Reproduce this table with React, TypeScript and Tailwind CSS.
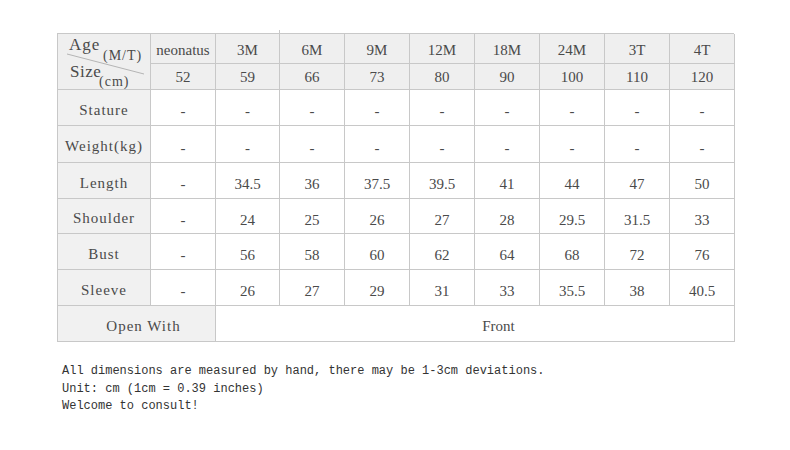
import React from "react";

const cols = ["neonatus", "3M", "6M", "9M", "12M", "18M", "24M", "3T", "4T"];
const sizes = ["52", "59", "66", "73", "80", "90", "100", "110", "120"];
const rows: { label: string; vals: string[]; h: string }[] = [
  { label: "Stature", vals: ["-", "-", "-", "-", "-", "-", "-", "-", "-"], h: "h-[36px]" },
  { label: "Weight(kg)", vals: ["-", "-", "-", "-", "-", "-", "-", "-", "-"], h: "h-[37px]" },
  { label: "Length", vals: ["-", "34.5", "36", "37.5", "39.5", "41", "44", "47", "50"], h: "h-[36px]" },
  { label: "Shoulder", vals: ["-", "24", "25", "26", "27", "28", "29.5", "31.5", "33"], h: "h-[35px]" },
  { label: "Bust", vals: ["-", "56", "58", "60", "62", "64", "68", "72", "76"], h: "h-[36px]" },
  { label: "Sleeve", vals: ["-", "26", "27", "29", "31", "33", "35.5", "38", "40.5"], h: "h-[36px]" },
];

const serif = { fontFamily: '"Liberation Serif", "Noto Serif", serif' };

export default function App() {
  return (
    <div className="w-[790px] h-[450px] bg-white relative" style={serif}>
      <div className="absolute left-[279px] top-[30px] w-px h-[3px] bg-[#c8c8c8]" />
      <div className="pt-[33px] pl-[57px]">
        <div className="grid grid-cols-[93px_65px_64px_65px_65px_65px_65px_65px_65px_65px] w-[677px] border-t border-l border-[#c8c8c8] text-[15px] text-[#4a4a4a]">
          {/* header corner */}
          <div className="row-span-2 relative bg-[#efefef] border-r border-b border-[#c8c8c8] overflow-hidden">
            <svg className="absolute left-0 top-0" width="93" height="56">
              <line x1="9" y1="20" x2="86" y2="40" stroke="#b5b5b5" strokeWidth="1" />
            </svg>
            <span className="absolute left-[11px] top-[1px] leading-[20px] text-[17px] tracking-[1px]">Age</span>
            <span className="absolute left-[45px] top-[12px] leading-[20px] text-[14px] tracking-[1px]">(M/T)</span>
            <span className="absolute left-[12px] top-[28px] leading-[20px] text-[17px] tracking-[0.5px]">Size</span>
            <span className="absolute left-[41px] top-[38px] leading-[20px] text-[14px] tracking-[1px]">(cm)</span>
          </div>
          {cols.map((c) => (
            <div key={c} className="h-[30px] bg-[#efefef] border-r border-b border-[#c8c8c8] flex items-center justify-center pt-[3px]">
              {c}
            </div>
          ))}
          {sizes.map((s) => (
            <div key={s} className="h-[26px] bg-[#efefef] border-r border-b border-[#c8c8c8] flex items-center justify-center pt-[2px]">
              {s}
            </div>
          ))}
          {rows.map((r) => (
            <React.Fragment key={r.label}>
              <div className={`${r.h} bg-[#f1f1f1] border-r border-b border-[#c8c8c8] flex items-center justify-center tracking-[1px] pt-[5px]`}>
                {r.label}
              </div>
              {r.vals.map((v, i) => (
                <div key={i} className={`${r.h} border-r border-b border-[#c8c8c8] flex items-center justify-center pt-[8px]`}>
                  {v}
                </div>
              ))}
            </React.Fragment>
          ))}
          <div className="col-span-2 h-[36px] bg-[#f1f1f1] border-r border-b border-[#c8c8c8] flex items-center justify-center pl-[14px] pt-[6px] tracking-[1px]">
            Open With
          </div>
          <div className="col-span-8 h-[36px] border-r border-b border-[#c8c8c8] flex items-center justify-center pl-[47px] pt-[6px]">
            Front
          </div>
        </div>
      </div>
      <div
        className="pl-[62px] pt-[21px] text-[12px] leading-[17.5px] text-[#333]"
        style={{ fontFamily: '"Liberation Mono", monospace' }}
      >
        <div>All dimensions are measured by hand, there may be 1-3cm deviations.</div>
        <div>Unit: cm (1cm = 0.39 inches)</div>
        <div>Welcome to consult!</div>
      </div>
    </div>
  );
}
